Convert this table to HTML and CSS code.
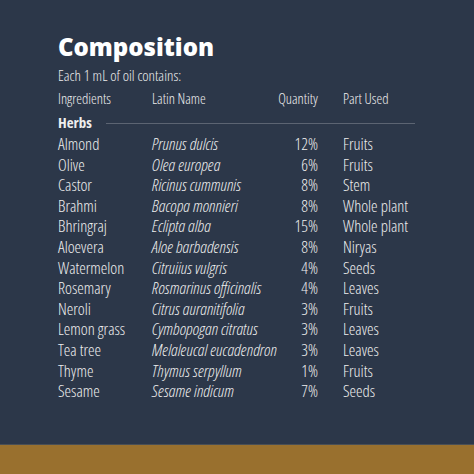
FILE: index.html
```html
<!DOCTYPE html>
<html>
<head>
<meta charset="utf-8">
<link rel="stylesheet" href="styles.css">
</head>
<body>
<div class="page">
  <main class="content">
    <h1 class="title">Composition</h1>
    <p class="intro">Each 1 mL of oil contains:</p>
    <div class="table">
      <div class="row head"><span>Ingredients</span><span>Latin Name</span><span class="qty">Quantity</span><span>Part Used</span></div>
      <div class="group"><span class="group-name">Herbs</span><span class="rule"></span></div>
      <div class="row"><span>Almond</span><span class="latin">Prunus dulcis</span><span class="qty">12%</span><span>Fruits</span></div>
      <div class="row"><span>Olive</span><span class="latin">Olea europea</span><span class="qty">6%</span><span>Fruits</span></div>
      <div class="row"><span>Castor</span><span class="latin">Ricinus cummunis</span><span class="qty">8%</span><span>Stem</span></div>
      <div class="row"><span>Brahmi</span><span class="latin">Bacopa monnieri</span><span class="qty">8%</span><span>Whole plant</span></div>
      <div class="row"><span>Bhringraj</span><span class="latin">Eclipta alba</span><span class="qty">15%</span><span>Whole plant</span></div>
      <div class="row"><span>Aloevera</span><span class="latin">Aloe barbadensis</span><span class="qty">8%</span><span>Niryas</span></div>
      <div class="row"><span>Watermelon</span><span class="latin">Citruiius vulgris</span><span class="qty">4%</span><span>Seeds</span></div>
      <div class="row"><span>Rosemary</span><span class="latin">Rosmarinus officinalis</span><span class="qty">4%</span><span>Leaves</span></div>
      <div class="row"><span>Neroli</span><span class="latin">Citrus auranitifolia</span><span class="qty">3%</span><span>Fruits</span></div>
      <div class="row"><span>Lemon grass</span><span class="latin">Cymbopogan citratus</span><span class="qty">3%</span><span>Leaves</span></div>
      <div class="row"><span>Tea tree</span><span class="latin">Melaleucal eucadendron</span><span class="qty">3%</span><span>Leaves</span></div>
      <div class="row"><span>Thyme</span><span class="latin">Thymus serpyllum</span><span class="qty">1%</span><span>Fruits</span></div>
      <div class="row"><span>Sesame</span><span class="latin">Sesame indicum</span><span class="qty">7%</span><span>Seeds</span></div>
    </div>
  </main>
  <footer class="band"></footer>
</div>
</body>
</html>
```
FILE: styles.css
```css
* { box-sizing: border-box; margin: 0; padding: 0; }
html, body { width: 474px; height: 474px; overflow: hidden; }
body { background: #2c3749; }
.page { width: 474px; height: 474px; display: flex; flex-direction: column; background: #2c3749; }
.content { flex: 1; min-height: 0; overflow: hidden; padding: 31px 0 0 58px; color: #eeeeee; font-family: "Open Sans", sans-serif; font-stretch: 75%; font-weight: 350; }
.title { font-family: "Open Sans", sans-serif; font-stretch: 100%; font-weight: 800; font-size: 24px; line-height: 32px; color: #ffffff; }
.intro { font-size: 15px; line-height: 20px; margin-top: 2px; }
.table { margin-top: 4px; width: 357px; }
.row { display: grid; grid-template-columns: 94px 110px 56px 1fr; font-size: 16.5px; line-height: 20.6px; white-space: nowrap; }
.row .qty { text-align: right; }
.row > span:nth-child(4) { padding-left: 25px; }
.row.head { font-size: 14.5px; line-height: 20px; }
.latin { font-style: italic; font-size: 17px; }
.group { display: flex; align-items: center; gap: 14px; height: 25px; }
.group-name { font-weight: 700; font-size: 15px; }
.rule { flex: 1; height: 1px; background: #5c6472; margin-top: 4px; }
.band { height: 30px; flex: none; background: #99702e; border-top: 1px solid #4a4f55; }
```
